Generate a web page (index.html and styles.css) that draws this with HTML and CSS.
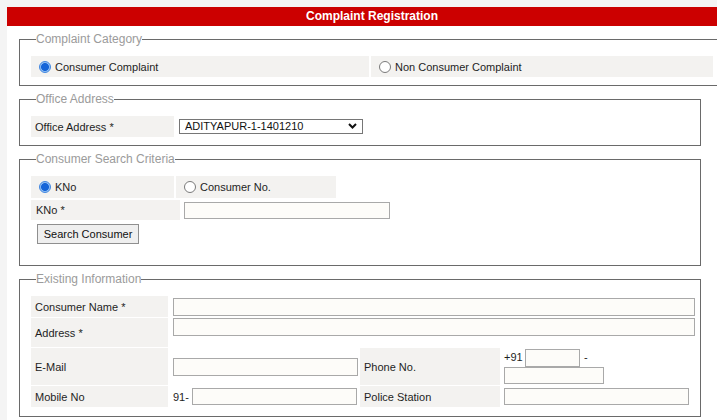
FILE: index.html
```html
<!DOCTYPE html>
<html>
<head>
<meta charset="utf-8">
<title>Complaint Registration</title>
<link rel="stylesheet" href="styles.css">
</head>
<body>
<div class="page">
  <div class="titlebar">Complaint Registration</div>

  <fieldset class="fs fs-wide">
    <legend>Complaint Category</legend>
    <div class="cat-row">
      <label class="cell radio-cell"><input type="radio" name="cat" checked>Consumer Complaint</label>
      <label class="cell radio-cell"><input type="radio" name="cat">Non Consumer Complaint</label>
    </div>
  </fieldset>

  <fieldset class="fs">
    <legend>Office Address</legend>
    <div class="office-row">
      <div class="cell label-cell office-label">Office Address *</div>
      <div class="select-wrap">
        <select class="select">
          <option>ADITYAPUR-1-1401210</option>
        </select>
        <svg class="chev" width="9" height="6" viewBox="0 0 9 6"><path d="M1 1 L4.5 4.5 L8 1" fill="none" stroke="#111" stroke-width="2"/></svg>
      </div>
    </div>
  </fieldset>

  <fieldset class="fs fs-search">
    <legend>Consumer Search Criteria</legend>
    <div class="search-radios">
      <label class="cell radio-cell"><input type="radio" name="by" checked>KNo</label>
      <label class="cell radio-cell"><input type="radio" name="by">Consumer No.</label>
    </div>
    <div class="kno-row">
      <div class="cell label-cell kno-label">KNo *</div>
      <input class="txt kno-input" type="text">
    </div>
    <button class="btn" type="button">Search Consumer</button>
  </fieldset>

  <fieldset class="fs fs-info">
    <legend>Existing Information</legend>
    <div class="info-grid">
      <div class="cell label-cell">Consumer Name *</div>
      <div class="span3 mid"><input class="txt full" type="text"></div>

      <div class="cell label-cell">Address *</div>
      <div class="span3 top"><input class="txt full" type="text"></div>

      <div class="cell label-cell">E-Mail</div>
      <div class="val mid"><input class="txt email" type="text"></div>
      <div class="cell label-cell">Phone No.</div>
      <div class="phone">
        <div class="phone-line">
          <span class="pfx">+91</span>
          <input class="txt std" type="text">
          <span class="dash">-</span>
        </div>
        <input class="txt phone-num" type="text">
      </div>

      <div class="cell label-cell">Mobile No</div>
      <div class="val mid"><span class="mpfx">91-</span><input class="txt mobile" type="text"></div>
      <div class="cell label-cell">Police Station</div>
      <div class="val4 mid"><input class="txt police" type="text"></div>
    </div>
  </fieldset>
</div>
</body>
</html>
```

FILE: styles.css
```css
html, body {
  margin: 0;
  padding: 0;
  overflow: hidden;
  background: #f4f4f4;
}

body {
  font-family: "Liberation Sans", Arial, sans-serif;
  font-size: 11px;
  color: #1e1e1e;
}

.page {
  margin: 7px 0 0 7px;
  width: 730px;
  height: 420px;
  background: #fff;
}

.titlebar {
  height: 19px;
  line-height: 19px;
  background: #cc0000;
  color: #fff;
  font-weight: bold;
  font-size: 12px;
  text-align: center;
}

.fs {
  box-sizing: border-box;
  width: 682px;
  min-width: 0;
  margin: 6px 0 0 12px;
  border: 1px solid #6a6a6a;
  padding: 10px 5px 8px 11px;
}

.fs legend {
  font-size: 12px;
  line-height: 14px;
  color: #9b9b9b;
  padding: 0;
  margin-left: 5px;
}

.fs-wide {
  width: 706px;
  padding-right: 11px;
}

.cell {
  background: #f3f2f0;
  display: flex;
  align-items: center;
  box-sizing: border-box;
}

.label-cell {
  padding-left: 4px;
}

.radio-cell input {
  appearance: none;
  -webkit-appearance: none;
  box-sizing: border-box;
  width: 12px;
  height: 12px;
  margin: 0 4px 0 8px;
  border-radius: 50%;
  border: 1px solid #7a7a7a;
  background: #fff;
}

.radio-cell input:checked {
  border: 1px solid #3f86e0;
  background: radial-gradient(circle, #1565d8 0, #1565d8 3.6px, #8cbcf2 4.3px, #a9cdf5 6px);
}

.cat-row {
  display: grid;
  grid-template-columns: 338px 1fr;
  column-gap: 2px;
  height: 21px;
}

.office-row {
  display: flex;
  align-items: center;
  height: 21px;
}

.office-label {
  width: 143px;
  height: 21px;
}

.select-wrap {
  position: relative;
  margin-left: 5px;
  width: 184px;
  height: 15px;
}

.select {
  appearance: none;
  -webkit-appearance: none;
  box-sizing: border-box;
  width: 184px;
  height: 15px;
  margin: 0;
  padding: 0 0 0 5px;
  border: 1px solid #767676;
  border-radius: 0;
  background: #fff;
  font-family: "Liberation Sans", Arial, sans-serif;
  font-size: 11px;
  line-height: 13px;
  color: #111;
}

.chev {
  position: absolute;
  right: 6px;
  top: 4px;
}

.fs-search {
  padding-bottom: 21px;
}

.search-radios {
  display: grid;
  grid-template-columns: 143px 160px;
  column-gap: 2px;
  height: 22px;
}

.kno-row {
  display: flex;
  align-items: center;
  margin-top: 2px;
  height: 20px;
}

.kno-label {
  width: 149px;
  height: 20px;
  padding-left: 5px;
}

.txt {
  box-sizing: border-box;
  margin: 0;
  padding: 0 3px;
  border: 1px solid #a9a9a9;
  border-radius: 0;
  background: #fdfcf9;
  font-family: "Liberation Sans", Arial, sans-serif;
  font-size: 11px;
  height: 18px;
}

.kno-input {
  margin-left: 4px;
  width: 206px;
  height: 17px;
}

.btn {
  display: block;
  box-sizing: border-box;
  margin: 4px 0 0 6px;
  width: 102px;
  height: 20px;
  padding: 0;
  border: 1px solid #8f8f8f;
  border-radius: 0;
  background: #efefef;
  font-family: "Liberation Sans", Arial, sans-serif;
  font-size: 11px;
  color: #111;
}

.fs-info {
  padding-bottom: 9px;
}

.info-grid {
  display: grid;
  grid-template-columns: 137px 188px 140px 193px;
  grid-template-rows: 21px 29px 37px 21px;
  column-gap: 2px;
  row-gap: 1px;
}

.span3 {
  grid-column: span 3;
  display: flex;
  padding-left: 3px;
}

.mid {
  align-items: center;
}

.top {
  align-items: flex-start;
}

.full {
  width: 100%;
}

.val {
  display: flex;
  padding-left: 3px;
}

.val4 {
  display: flex;
  padding-left: 2px;
}

.email {
  width: 185px;
}

.phone {
  padding: 1px 0 0 2px;
  display: flex;
  flex-direction: column;
  align-items: flex-start;
}

.phone-line {
  display: flex;
  align-items: flex-start;
  height: 18px;
}

.pfx {
  margin-top: 2px;
  width: 21px;
}

.std {
  width: 55px;
}

.dash {
  margin: 2px 0 0 4px;
}

.phone-num {
  width: 100px;
  height: 17px;
}

.mpfx {
  width: 19px;
}

.mobile {
  width: 165px;
  height: 17px;
}

.police {
  width: 185px;
  height: 17px;
}
```
